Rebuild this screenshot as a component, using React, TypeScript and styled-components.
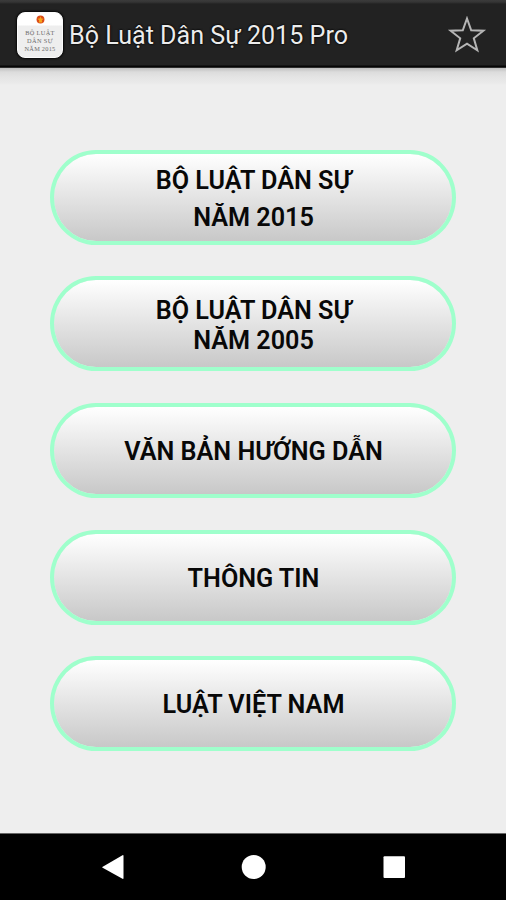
import React from "react";
import styled, { createGlobalStyle } from "styled-components";

const GlobalStyle = createGlobalStyle`
  * { box-sizing: border-box; }
  body { margin: 0; background: #eee; }
`;

const Screen = styled.div`
  width: 506px;
  height: 900px;
  display: flex;
  flex-direction: column;
  overflow: hidden;
  background: #eeeeee;
  font-family: Roboto, "Noto Sans", sans-serif;
`;

const ActionBar = styled.header`
  height: 68px;
  flex: none;
  display: flex;
  align-items: center;
  padding: 0 19px 0 17px;
  background: linear-gradient(#3b3b3b 0, #353535 2px, #222222 4px, #222222 65px, #050505 66px, #050505 67px, #555 68px);
`;

const AppIcon = styled.div`
  width: 46px;
  height: 46px;
  margin: 1px 6px 0 0;
  flex: none;
  overflow: hidden;
  border: 1px solid #fbfbfb;
  border-radius: 8px;
  background: linear-gradient(#ffffff 12px, #eeeeee 13px);
  box-shadow: 0 0 2px 1px #080808;
  display: flex;
  flex-direction: column;
  align-items: center;
`;

const Emblem = styled.svg`
  display: block;
  width: 9px;
  height: 9px;
  margin: 2px 0 5px;
`;

const IconText = styled.span<{ $spacing: number }>`
  color: #6a6a6a;
  font: 6.3px/8px "Liberation Serif", serif;
  letter-spacing: ${(p) => p.$spacing}px;
  white-space: nowrap;
`;

const Title = styled.h1`
  flex: 1;
  margin: 0;
  padding-top: 3px;
  color: #ececec;
  font-size: 25.1px;
  font-weight: 400;
  line-height: 32px;
  white-space: nowrap;
  text-shadow: 0 0 2px #000, 0 0 2px #000;
`;

const Star = styled.svg`
  display: block;
  width: 40px;
  height: 38px;
  margin-top: 2px;
`;

const Menu = styled.main`
  flex: 1;
  display: flex;
  flex-direction: column;
  align-items: center;
  gap: 31.7px;
  padding-top: 81.5px;
  background: linear-gradient(#bebebe 0, #dcdcdc 4px, #e4e4e4 9px, #eaeaea 15px, #eeeeee 17px);
`;

const MenuButton = styled.button<{ $leading: number; $drop: number }>`
  width: 406px;
  height: 95px;
  flex: none;
  display: flex;
  flex-direction: column;
  align-items: center;
  justify-content: center;
  padding: ${(p) => p.$drop}px 0 0 1px;
  border: 4px solid #9fffcc;
  border-radius: 46px / 47.5px;
  background: linear-gradient(#ffffff, #c8c8c8) padding-box;
  color: #080808;
  font-family: inherit;
  font-size: 25.2px;
  font-weight: 600;
  line-height: ${(p) => p.$leading}px;
`;

const Line = styled.span`
  white-space: nowrap;
`;

const NavBar = styled.nav`
  height: 67px;
  flex: none;
  display: flex;
  justify-content: space-between;
  padding: 19.5px 99px 0 101px;
  border-top: 1px solid #666;
  background: #000;
`;

const NavIcon = styled.svg`
  display: block;
  width: 26px;
  height: 26px;
  fill: #fff;
`;

const entries = [
  { lines: ["BỘ LUẬT DÂN SỰ", "NĂM 2015"], leading: 37, drop: 4 },
  { lines: ["BỘ LUẬT DÂN SỰ", "NĂM 2005"], leading: 30, drop: 4 },
  { lines: ["VĂN BẢN HƯỚNG DẪN"], leading: 30, drop: 4 },
  { lines: ["THÔNG TIN"], leading: 30, drop: 4 },
  { lines: ["LUẬT VIỆT NAM"], leading: 30, drop: 3 },
];

export default function App() {
  return (
    <Screen>
      <GlobalStyle />
      <ActionBar>
        <AppIcon>
          <Emblem viewBox="0 0 10 10">
            <circle cx="5" cy="5" r="4.4" fill="#dc4a17" />
            <path d="M5 1.5 6 4l2.5.2-2 1.7.5 2.4H3l.5-2.4-2-1.7L4 4Z" fill="#f6a51c" />
          </Emblem>
          <IconText $spacing={0.35}>BỘ LUẬT</IconText>
          <IconText $spacing={0.4}>DÂN SỰ</IconText>
          <IconText $spacing={0.25}>NĂM 2015</IconText>
        </AppIcon>
        <Title>Bộ Luật Dân Sự 2015 Pro</Title>
        <Star viewBox="0 0 40 38">
          <path
            d="M20 2.5 24.2 14.3 36.4 14.7 26.8 22.3 30.3 34.3 20 27.6 9.7 34.3 13.2 22.3 3.6 14.7 15.8 14.3Z"
            fill="none"
            stroke="#b5b5b5"
            strokeWidth="2"
          />
        </Star>
      </ActionBar>
      <Menu>
        {entries.map((entry) => (
          <MenuButton key={entry.lines.join(" ")} $leading={entry.leading} $drop={entry.drop}>
            {entry.lines.map((line) => (
              <Line key={line}>{line}</Line>
            ))}
          </MenuButton>
        ))}
      </Menu>
      <NavBar>
        <NavIcon viewBox="0 0 26 26">
          <path d="M1.3 13 21.5 1.2Q22.5.8 22.5 2V24Q22.5 25.3 21.5 24.8L1.6 13.8Q1 13.4 1.3 13Z" />
        </NavIcon>
        <NavIcon viewBox="0 0 26 26">
          <circle cx="12.7" cy="13" r="12" />
        </NavIcon>
        <NavIcon viewBox="0 0 26 26">
          <rect x="2.5" y="2.3" width="21.5" height="21.7" rx="1" />
        </NavIcon>
      </NavBar>
    </Screen>
  );
}
